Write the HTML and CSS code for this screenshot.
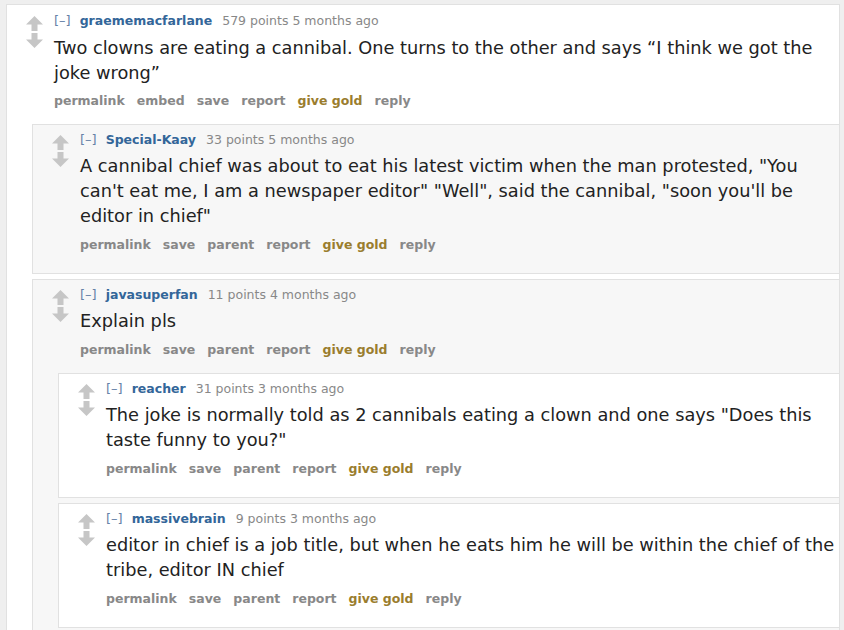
FILE: index.html
```html
<!DOCTYPE html>
<html>
<head>
<meta charset="utf-8">
<title>Comments</title>
<link rel="stylesheet" href="styles.css">
</head>
<body>
<div class="page">
  <div class="comment depth0">
    <div class="row">
      <div class="midcol">
        <svg class="arrow" viewBox="0 0 17 15"><path d="M8.5 0 L17 8.5 L11.5 8.5 L11.5 15 L5.5 15 L5.5 8.5 L0 8.5 Z"/></svg>
        <svg class="arrow" viewBox="0 0 17 15"><path d="M5.5 0 H11.5 V6.5 H17 L8.5 15 L0 6.5 H5.5 Z"/></svg>
      </div>
      <div class="entry">
        <p class="tagline"><span class="expand">[–]</span><span class="author">graememacfarlane</span><span class="score">579 points 5 months ago</span></p>
        <div class="md"><p>Two clowns are eating a cannibal. One turns to the other and says “I think we got the joke wrong”</p></div>
        <ul class="buttons"><li>permalink</li><li>embed</li><li>save</li><li>report</li><li class="gold">give gold</li><li>reply</li></ul>
      </div>
    </div>
    <div class="children">
      <div class="comment depth1">
        <div class="row">
          <div class="midcol">
            <svg class="arrow" viewBox="0 0 17 15"><path d="M8.5 0 L17 8.5 L11.5 8.5 L11.5 15 L5.5 15 L5.5 8.5 L0 8.5 Z"/></svg>
            <svg class="arrow" viewBox="0 0 17 15"><path d="M5.5 0 H11.5 V6.5 H17 L8.5 15 L0 6.5 H5.5 Z"/></svg>
          </div>
          <div class="entry">
            <p class="tagline"><span class="expand">[–]</span><span class="author">Special-Kaay</span><span class="score">33 points 5 months ago</span></p>
            <div class="md"><p>A cannibal chief was about to eat his latest victim when the man protested, "You can't eat me, I am a newspaper editor" "Well", said the cannibal, "soon you'll be editor in chief"</p></div>
            <ul class="buttons"><li>permalink</li><li>save</li><li>parent</li><li>report</li><li class="gold">give gold</li><li>reply</li></ul>
          </div>
        </div>
      </div>
      <div class="comment depth1">
        <div class="row">
          <div class="midcol">
            <svg class="arrow" viewBox="0 0 17 15"><path d="M8.5 0 L17 8.5 L11.5 8.5 L11.5 15 L5.5 15 L5.5 8.5 L0 8.5 Z"/></svg>
            <svg class="arrow" viewBox="0 0 17 15"><path d="M5.5 0 H11.5 V6.5 H17 L8.5 15 L0 6.5 H5.5 Z"/></svg>
          </div>
          <div class="entry">
            <p class="tagline"><span class="expand">[–]</span><span class="author">javasuperfan</span><span class="score">11 points 4 months ago</span></p>
            <div class="md"><p>Explain pls</p></div>
            <ul class="buttons"><li>permalink</li><li>save</li><li>parent</li><li>report</li><li class="gold">give gold</li><li>reply</li></ul>
          </div>
        </div>
        <div class="children">
          <div class="comment depth2">
            <div class="row">
              <div class="midcol">
                <svg class="arrow" viewBox="0 0 17 15"><path d="M8.5 0 L17 8.5 L11.5 8.5 L11.5 15 L5.5 15 L5.5 8.5 L0 8.5 Z"/></svg>
                <svg class="arrow" viewBox="0 0 17 15"><path d="M5.5 0 H11.5 V6.5 H17 L8.5 15 L0 6.5 H5.5 Z"/></svg>
              </div>
              <div class="entry">
                <p class="tagline"><span class="expand">[–]</span><span class="author">reacher</span><span class="score">31 points 3 months ago</span></p>
                <div class="md"><p>The joke is normally told as 2 cannibals eating a clown and one says "Does this taste funny to you?"</p></div>
                <ul class="buttons"><li>permalink</li><li>save</li><li>parent</li><li>report</li><li class="gold">give gold</li><li>reply</li></ul>
              </div>
            </div>
          </div>
          <div class="comment depth2">
            <div class="row">
              <div class="midcol">
                <svg class="arrow" viewBox="0 0 17 15"><path d="M8.5 0 L17 8.5 L11.5 8.5 L11.5 15 L5.5 15 L5.5 8.5 L0 8.5 Z"/></svg>
                <svg class="arrow" viewBox="0 0 17 15"><path d="M5.5 0 H11.5 V6.5 H17 L8.5 15 L0 6.5 H5.5 Z"/></svg>
              </div>
              <div class="entry">
                <p class="tagline"><span class="expand">[–]</span><span class="author">massivebrain</span><span class="score">9 points 3 months ago</span></p>
                <div class="md"><p>editor in chief is a job title, but when he eats him he will be within the chief of the tribe, editor IN chief</p></div>
                <ul class="buttons"><li>permalink</li><li>save</li><li>parent</li><li>report</li><li class="gold">give gold</li><li>reply</li></ul>
              </div>
            </div>
          </div>
        </div>
      </div>
    </div>
  </div>
</div>
</body>
</html>
```

FILE: styles.css
```css
html, body {
  margin: 0;
  padding: 0;
  height: 630px;
  overflow: hidden;
  background: #efefef;
}

body {
  font-family: "DejaVu Sans", Verdana, sans-serif;
}

.page {
  padding: 4px 4px 0 6px;
}

.comment {
  border: 1px solid #e1e1e1;
  padding: 7px 0 12px 0;
  background: #ffffff;
}

.depth0 {
  padding-top: 8px;
}

.depth1 {
  background: #f7f7f7;
}

.depth2 {
  background: #ffffff;
}

.children {
  margin-top: 7px;
}

.children > .comment {
  margin-left: 25px;
  margin-bottom: 5px;
  border-right: none;
}

.row {
  display: flex;
}

.midcol {
  width: 28px;
  padding-left: 19px;
  padding-top: 3px;
  display: flex;
  flex-direction: column;
  gap: 2px;
  flex-shrink: 0;
}

.arrow {
  display: block;
  width: 17px;
  height: 15px;
  fill: #c6c6c6;
}

.entry {
  flex: 1;
  min-width: 0;
  padding-bottom: 9px;
}

.tagline {
  margin: 0;
  font-size: 12.5px;
  line-height: 15px;
  color: #888888;
  white-space: nowrap;
}

.expand {
  color: #6682a8;
  font-size: 13px;
  margin-right: 9px;
}

.author {
  color: #336699;
  font-weight: bold;
  margin-right: 10px;
}

.md {
  margin-top: 7px;
  font-size: 17.75px;
  line-height: 25px;
  color: #222222;
}

.md p {
  margin: 0;
}

.depth0 > .row .md {
  margin-top: 8px;
}

.buttons {
  list-style: none;
  margin: 8px 0 0 0;
  padding: 0;
  display: flex;
  gap: 12px;
  font-size: 12.5px;
  line-height: 15px;
  font-weight: bold;
  color: #888888;
}

.depth0 > .row .buttons {
  margin-top: 7px;
}

.buttons .gold {
  color: #9a7d2e;
}
```
